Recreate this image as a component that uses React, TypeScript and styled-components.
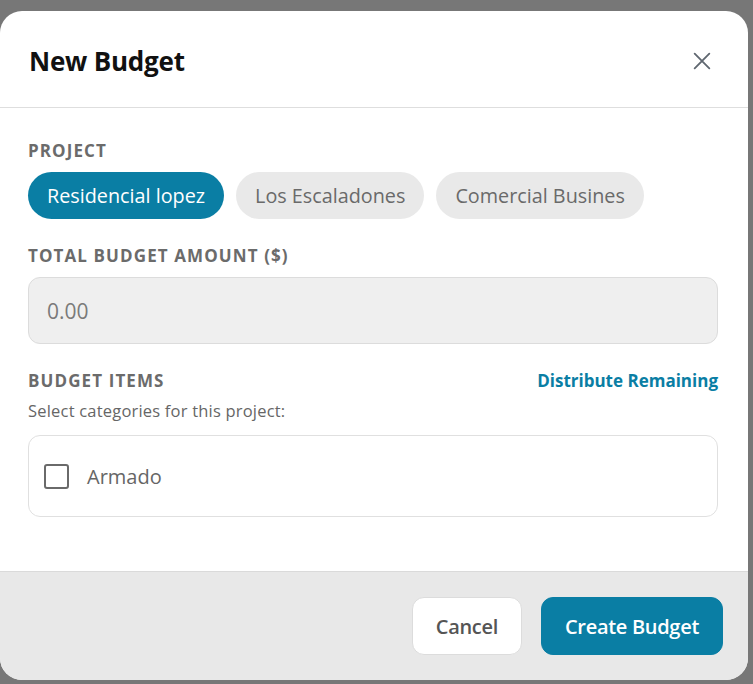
import { useState } from "react";
import styled, { createGlobalStyle } from "styled-components";

const teal = "#0a7ea4";

const GlobalStyle = createGlobalStyle`
  html, body {
    margin: 0;
    padding: 0;
    background: #777777;
    font-family: "Open Sans", "Noto Sans", sans-serif;
  }
`;

const Backdrop = styled.div`
  min-height: 684px;
  padding-top: 11px;
  box-sizing: border-box;
`;

const Modal = styled.div`
  width: 748px;
  background: #fff;
  border-radius: 22px;
  overflow: hidden;
  display: flex;
  flex-direction: column;
  height: 669px;
`;

const Header = styled.div`
  height: 97px;
  box-sizing: border-box;
  border-bottom: 1px solid #dedede;
  display: flex;
  align-items: center;
  justify-content: space-between;
  padding: 4px 34px 0 29px;
`;

const Title = styled.h2`
  margin: 0;
  font-size: 26px;
  font-weight: 700;
  color: #111;
  letter-spacing: -0.2px;
`;

const CloseButton = styled.button`
  border: none;
  background: none;
  padding: 0;
  width: 24px;
  height: 24px;
  display: flex;
  align-items: center;
  justify-content: center;
  cursor: pointer;
  color: #5f6770;
`;

const Body = styled.div`
  flex: 1;
  padding: 33px 30px 0 28px;
`;

const Label = styled.div<{ $gap?: number }>`
  font-size: 17px;
  line-height: 20px;
  font-weight: 700;
  color: #6b6b6b;
  text-transform: uppercase;
  letter-spacing: 1.1px;
  margin-top: ${(p) => p.$gap ?? 0}px;
`;

const ChipRow = styled.div`
  display: flex;
  gap: 12px;
  margin-top: 11px;
`;

const Chip = styled.button<{ $active?: boolean }>`
  height: 47px;
  padding: 0 19px;
  border-radius: 24px;
  border: none;
  font-family: inherit;
  font-size: 19.8px;
  letter-spacing: 0;
  cursor: pointer;
  background: ${(p) => (p.$active ? teal : "#e9e9e9")};
  color: ${(p) => (p.$active ? "#fff" : "#6a6a6a")};
`;

const AmountInput = styled.input`
  display: block;
  box-sizing: border-box;
  width: 100%;
  height: 67px;
  margin-top: 11px;
  padding: 0 18px;
  background: #efefef;
  border: 1px solid #dcdcdc;
  border-radius: 12px;
  font-family: inherit;
  font-size: 21px;
  color: #333;
  outline: none;
  &::placeholder {
    color: #7a7a7a;
  }
`;

const SectionHead = styled.div`
  display: flex;
  justify-content: space-between;
  align-items: center;
  margin-top: 27px;
`;

const LinkButton = styled.button`
  border: none;
  background: none;
  padding: 0;
  font-family: inherit;
  font-size: 17px;
  line-height: 20px;
  font-weight: 700;
  color: ${teal};
  cursor: pointer;
  letter-spacing: 0;
`;

const Hint = styled.div`
  margin-top: 10px;
  font-size: 16.5px;
  line-height: 20px;
  color: #666;
  letter-spacing: 0.2px;
`;

const ItemsBox = styled.div`
  margin-top: 14px;
  border: 1px solid #e0e0e0;
  border-radius: 12px;
  height: 82px;
  box-sizing: border-box;
  display: flex;
  align-items: center;
  padding: 0 15px;
`;

const CheckRow = styled.label`
  display: flex;
  align-items: center;
  gap: 18px;
  cursor: pointer;
  font-size: 20px;
  color: #666;
`;

const Box = styled.span<{ $checked: boolean }>`
  width: 25px;
  height: 25px;
  box-sizing: border-box;
  border: 2.5px solid ${(p) => (p.$checked ? teal : "#6a6a6a")};
  background: ${(p) => (p.$checked ? teal : "transparent")};
  border-radius: 3px;
  display: flex;
  align-items: center;
  justify-content: center;
`;

const Footer = styled.div`
  height: 109px;
  box-sizing: border-box;
  background: #e8e8e8;
  border-top: 1px solid #dadada;
  display: flex;
  justify-content: flex-end;
  align-items: center;
  gap: 19px;
  padding: 0 25px 0 0;
`;

const FooterButton = styled.button<{ $primary?: boolean }>`
  height: 58px;
  padding: 0 23px;
  border-radius: 12px;
  font-family: inherit;
  font-size: 20px;
  font-weight: 600;
  letter-spacing: -0.3px;
  cursor: pointer;
  border: 1px solid ${(p) => (p.$primary ? teal : "#dcdcdc")};
  background: ${(p) => (p.$primary ? teal : "#fff")};
  color: ${(p) => (p.$primary ? "#fff" : "#555")};
`;

const projects = ["Residencial lopez", "Los Escaladones", "Comercial Busines"];

export default function App() {
  const [project, setProject] = useState(0);
  const [checked, setChecked] = useState(false);
  const [amount, setAmount] = useState("");

  return (
    <>
      <GlobalStyle />
      <Backdrop>
        <Modal>
          <Header>
            <Title>New Budget</Title>
            <CloseButton aria-label="Close">
              <svg width="22" height="22" viewBox="0 0 24 24" fill="none" stroke="currentColor" strokeWidth="2" strokeLinecap="round">
                <path d="M4 4L20 20M20 4L4 20" />
              </svg>
            </CloseButton>
          </Header>
          <Body>
            <Label>Project</Label>
            <ChipRow>
              {projects.map((p, i) => (
                <Chip key={p} $active={i === project} onClick={() => setProject(i)}>
                  {p}
                </Chip>
              ))}
            </ChipRow>
            <Label $gap={27}>Total Budget Amount ($)</Label>
            <AmountInput
              placeholder="0.00"
              value={amount}
              onChange={(e) => setAmount(e.target.value)}
            />
            <SectionHead>
              <Label>Budget Items</Label>
              <LinkButton>Distribute Remaining</LinkButton>
            </SectionHead>
            <Hint>Select categories for this project:</Hint>
            <ItemsBox>
              <CheckRow onClick={() => setChecked((c) => !c)}>
                <Box $checked={checked}>
                  {checked && (
                    <svg width="14" height="14" viewBox="0 0 24 24" fill="none" stroke="#fff" strokeWidth="4">
                      <path d="M4 12l5 5L20 6" />
                    </svg>
                  )}
                </Box>
                Armado
              </CheckRow>
            </ItemsBox>
          </Body>
          <Footer>
            <FooterButton>Cancel</FooterButton>
            <FooterButton $primary>Create Budget</FooterButton>
          </Footer>
        </Modal>
      </Backdrop>
    </>
  );
}
